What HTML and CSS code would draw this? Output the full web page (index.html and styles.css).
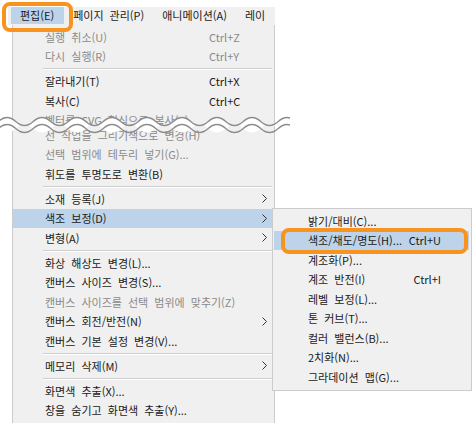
FILE: index.html
```html
<!DOCTYPE html>
<html lang="ko">
<head>
<meta charset="utf-8">
<title>편집 메뉴</title>
<link rel="stylesheet" href="styles.css">
</head>
<body>
<div class="stage">
  <div class="menubar">
    <span class="mb-item active">편집(E)</span>
    <span class="mb-item">페이지 관리(P)</span>
    <span class="mb-item">애니메이션(A)</span>
    <span class="mb-item">레이</span>
  </div>
  <div class="menu main">
    <div class="item disabled"><span class="label">실행 취소(U)</span><span class="key">Ctrl+Z</span></div>
    <div class="item disabled"><span class="label">다시 실행(R)</span><span class="key">Ctrl+Y</span></div>
    <div class="sep"></div>
    <div class="item"><span class="label">잘라내기(T)</span><span class="key">Ctrl+X</span></div>
    <div class="item"><span class="label">복사(C)</span><span class="key">Ctrl+C</span></div>
    <div class="item disabled"><span class="label">벡터를 SVG 형식으로 복사(V)</span></div>
    <div class="item disabled cut"><span class="label">선 작업을 그리기색으로 변경(H)</span></div>
    <div class="item disabled"><span class="label">선택 범위에 테두리 넣기(G)...</span></div>
    <div class="item"><span class="label">휘도를 투명도로 변환(B)</span></div>
    <div class="sep"></div>
    <div class="item"><span class="label">소재 등록(J)</span><span class="key"></span><svg class="arrow" width="5" height="9" viewBox="0 0 5 9"><path d="M0.5 0.5 L4.5 4.5 L0.5 8.5" /></svg></div>
    <div class="item hl"><span class="label">색조 보정(D)</span><span class="key"></span><svg class="arrow" width="5" height="9" viewBox="0 0 5 9"><path d="M0.5 0.5 L4.5 4.5 L0.5 8.5" /></svg></div>
    <div class="item"><span class="label">변형(A)</span><span class="key"></span><svg class="arrow" width="5" height="9" viewBox="0 0 5 9"><path d="M0.5 0.5 L4.5 4.5 L0.5 8.5" /></svg></div>
    <div class="sep"></div>
    <div class="item"><span class="label">화상 해상도 변경(L)...</span></div>
    <div class="item"><span class="label">캔버스 사이즈 변경(S)...</span></div>
    <div class="item disabled"><span class="label">캔버스 사이즈를 선택 범위에 맞추기(Z)</span></div>
    <div class="item"><span class="label">캔버스 회전/반전(N)</span><span class="key"></span><svg class="arrow" width="5" height="9" viewBox="0 0 5 9"><path d="M0.5 0.5 L4.5 4.5 L0.5 8.5" /></svg></div>
    <div class="item"><span class="label">캔버스 기본 설정 변경(V)...</span></div>
    <div class="sep"></div>
    <div class="item"><span class="label">메모리 삭제(M)</span><span class="key"></span><svg class="arrow" width="5" height="9" viewBox="0 0 5 9"><path d="M0.5 0.5 L4.5 4.5 L0.5 8.5" /></svg></div>
    <div class="sep"></div>
    <div class="item"><span class="label">화면색 추출(X)...</span></div>
    <div class="item"><span class="label">창을 숨기고 화면색 추출(Y)...</span></div>
  </div>

  <div class="menu sub">
    <div class="item"><span class="label">밝기/대비(C)...</span></div>
    <div class="item hl"><span class="label">색조/채도/명도(H)...</span><span class="key">Ctrl+U</span></div>
    <div class="item"><span class="label">계조화(P)...</span></div>
    <div class="item"><span class="label">계조 반전(I)</span><span class="key">Ctrl+I</span></div>
    <div class="item"><span class="label">레벨 보정(L)...</span></div>
    <div class="item"><span class="label">톤 커브(T)...</span></div>
    <div class="item"><span class="label">컬러 밸런스(B)...</span></div>
    <div class="item"><span class="label">2치화(N)...</span></div>
    <div class="item"><span class="label">그라데이션 맵(G)...</span></div>
  </div>

  <svg class="wave" width="290" height="30" viewBox="0 0 290 30">
    <path class="wave-fill" d="M-36.75 9.5 q8.75 -8 17.5 0 t17.5 0 t17.5 0 t17.5 0 t17.5 0 t17.5 0 t17.5 0 t17.5 0 t17.5 0 t17.5 0 t17.5 0 t17.5 0 t17.5 0 t17.5 0 t17.5 0 t17.5 0 t17.5 0 t17.5 0 t17.5 0 t17.5 0 L313.25 16.5 q-8.75 -8 -17.5 0 t-17.5 0 t-17.5 0 t-17.5 0 t-17.5 0 t-17.5 0 t-17.5 0 t-17.5 0 t-17.5 0 t-17.5 0 t-17.5 0 t-17.5 0 t-17.5 0 t-17.5 0 t-17.5 0 t-17.5 0 t-17.5 0 t-17.5 0 t-17.5 0 t-17.5 0 Z"/>
    <path class="wave-line" d="M-36.75 9.5 q8.75 -8 17.5 0 t17.5 0 t17.5 0 t17.5 0 t17.5 0 t17.5 0 t17.5 0 t17.5 0 t17.5 0 t17.5 0 t17.5 0 t17.5 0 t17.5 0 t17.5 0 t17.5 0 t17.5 0 t17.5 0 t17.5 0 t17.5 0 t17.5 0"/>
    <path class="wave-line" d="M-36.75 16.5 q8.75 -8 17.5 0 t17.5 0 t17.5 0 t17.5 0 t17.5 0 t17.5 0 t17.5 0 t17.5 0 t17.5 0 t17.5 0 t17.5 0 t17.5 0 t17.5 0 t17.5 0 t17.5 0 t17.5 0 t17.5 0 t17.5 0 t17.5 0 t17.5 0"/>
  </svg>

  <div class="callout c1"></div>
  <div class="callout c2"></div>
</div>
</body>
</html>
```

FILE: styles.css
```css
* { box-sizing: border-box; }

body {
  margin: 0;
  background: #ffffff;
  font-family: "Noto Sans CJK KR", "Noto Sans", sans-serif;
  font-size: 11px;
  word-spacing: 3px;
  color: #1a1a1a;
}

.stage {
  position: relative;
  width: 474px;
  height: 423px;
  overflow: hidden;
  padding-top: 7px;
}

.menubar {
  display: flex;
  margin-left: 8px;
  width: 267px;
  height: 18px;
  padding-left: 3px;
  background: #f0f0f0;
  overflow: hidden;
  white-space: nowrap;
}

.mb-item {
  padding: 0 9px;
  height: 17px;
  line-height: 17px;
}

.mb-item.active {
  padding-right: 10px;
  background: #bcd3ea;
}

.menu {
  background: #f0f0f0;
  border: 1px solid #cccccc;
}

.main {
  margin-left: 12px;
  width: 263px;
  border-top: none;
  padding: 2px 0 3px;
}

.item {
  display: grid;
  grid-template-columns: 164px 1fr 14px;
  align-items: center;
  height: 19.5px;
  padding-left: 32px;
  margin-right: 2px;
  white-space: nowrap;
}

.item.cut {
  margin-top: -5px;
}

.item.disabled {
  color: #8a8a8a;
}

.item.hl {
  background: #bcd3ea;
}

.arrow {
  margin-left: 4px;
}

.arrow path {
  fill: none;
  stroke: #333333;
  stroke-width: 1;
}

.sep {
  height: 2px;
  margin: 2px 2px 1.5px 30px;
  border-top: 1px solid #cfcfcf;
  border-bottom: 1px solid #ffffff;
}

.sub {
  position: absolute;
  left: 272px;
  top: 208px;
  width: 200px;
  padding: 2px 0 3px;
}

.sub .item {
  grid-template-columns: 1fr auto;
  padding: 0 28px 0 34px;
  margin: 0 2px 0 1px;
}

.sub .key {
  justify-self: end;
}

.wave {
  position: absolute;
  left: 0;
  top: 112px;
}

.wave-fill {
  fill: #ffffff;
}

.wave-line {
  fill: none;
  stroke: #8c8c8c;
  stroke-width: 1.3;
}

.callout {
  position: absolute;
  border: 4px solid #f7931e;
  border-radius: 8px;
}

.c1 {
  left: 2px;
  top: 2px;
  width: 71px;
  height: 30px;
}

.c2 {
  left: 281px;
  top: 228px;
  width: 187px;
  height: 26px;
}
```
